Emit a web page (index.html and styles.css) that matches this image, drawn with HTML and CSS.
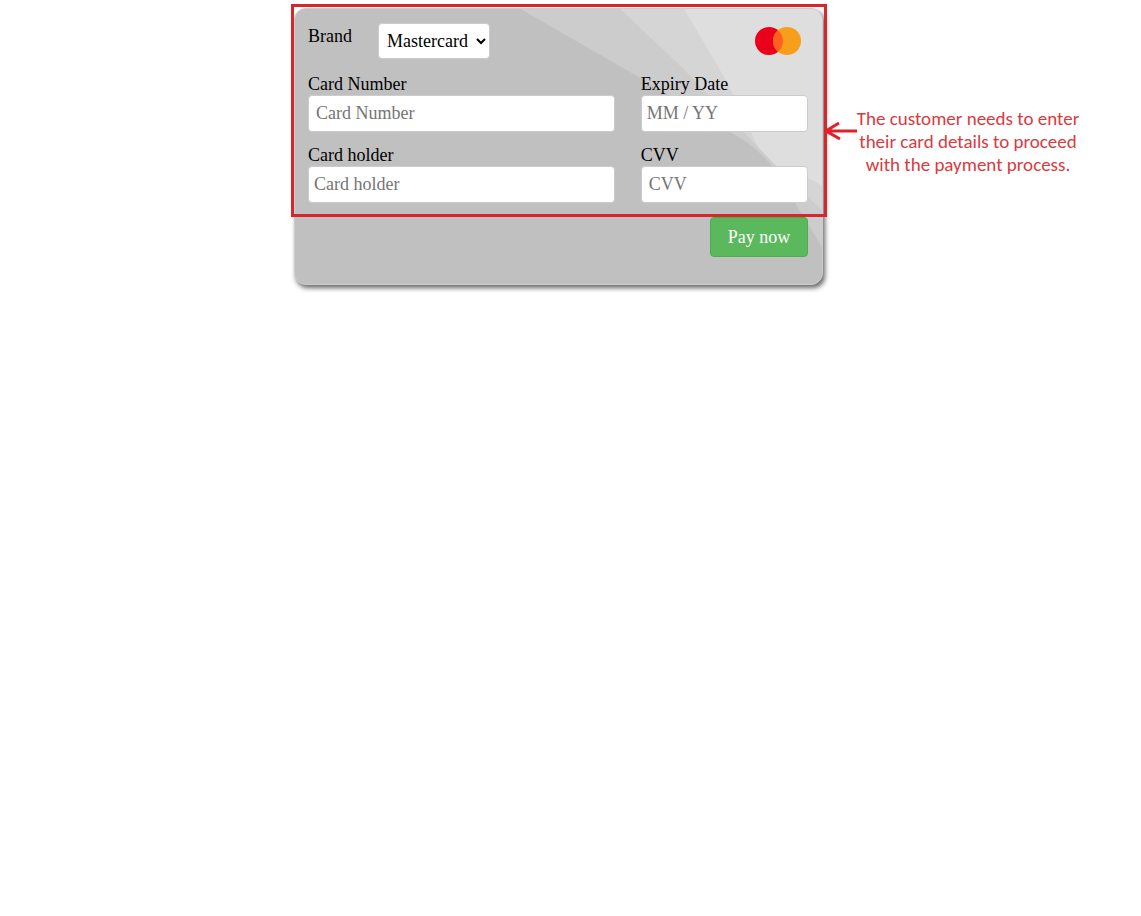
FILE: index.html
```
<!DOCTYPE html>
<html lang="en">
<head>
    <meta charset="UTF-8">
    <meta name="viewport" content="width=device-width, initial-scale=1.0">
    <title>Payment</title>
    <link rel="stylesheet" href="styles.css">
</head>
<body>
    <div class="checkout">
        <form class="card">
            <svg class="card-rays" viewBox="0 0 528 277" preserveAspectRatio="none" aria-hidden="true">
                <path d="M226 0 L347 70 L432 122 Q463 138 480 161 L511 212 L528 240 V0 Z" fill="#cccccc"/>
                <path d="M326 0 L390 61 L400 72 L481 157 L528 203 V0 Z" fill="#d5d5d5"/>
                <path d="M390 0 L432 72 L464 139 L481 157 Q507 166 528 178 V0 Z" fill="#dedede"/>
            </svg>
            <div class="brand-row">
                <label for="brand">Brand</label>
                <select id="brand">
                    <option>Mastercard</option>
                    <option>Visa</option>
                </select>
                <svg class="brand-logo" viewBox="0 0 46 28" role="img" aria-label="Mastercard">
                    <circle cx="14" cy="14" r="14" fill="#eb001b"/>
                    <circle cx="32" cy="14" r="14" fill="#f79e1b"/>
                    <path d="M23 3.3 A14 14 0 0 1 23 24.7 A14 14 0 0 1 23 3.3 Z" fill="#ff5f1f"/>
                </svg>
            </div>
            <div class="fields">
                <div class="field">
                    <label for="number">Card Number</label>
                    <input type="text" id="number" class="indent" placeholder="Card Number">
                </div>
                <div class="field">
                    <label for="expiry">Expiry Date</label>
                    <input type="text" id="expiry" placeholder="MM / YY">
                </div>
                <div class="field">
                    <label for="holder">Card holder</label>
                    <input type="text" id="holder" placeholder="Card holder">
                </div>
                <div class="field">
                    <label for="cvv">CVV</label>
                    <input type="text" id="cvv" class="indent" placeholder="CVV">
                </div>
            </div>
            <button type="button" class="pay">Pay now</button>
        </form>
        <div class="highlight"></div>
        <div class="note">
            <svg class="arrow" viewBox="0 0 32 20" aria-hidden="true">
                <path d="M32 10 H2 M14 2 L1 10 L15 18" fill="none" stroke="#e3202a" stroke-width="3"/>
            </svg>
            <p>The customer needs to enter their card details to proceed with the payment process.</p>
        </div>
    </div>
</body>
</html>
```
FILE: styles.css
```
* {
    box-sizing: border-box;
}
body {
    margin: 0;
    padding: 8px 24px 8px 0;
    background-color: #fff;
    font-family: 'Liberation Serif', 'Times New Roman', serif;
    font-size: 18px;
    line-height: 21px;
    color: #000;
}
.checkout {
    position: relative;
    max-width: 529px;
    margin: 0 auto;
}
.card {
    position: relative;
    padding: 14px 14px 27px 13px;
    border: 1px solid #ccc;
    border-radius: 12px;
    background-color: #c0c0c0;
    box-shadow: 2px 3px 5px rgba(0, 0, 0, 0.6);
    overflow: hidden;
    display: flex;
    flex-direction: column;
}
.card-rays {
    position: absolute;
    top: 0;
    left: 0;
    width: 100%;
    height: 100%;
}
.brand-row,
.fields,
.pay {
    position: relative;
}
.brand-row {
    display: flex;
    align-items: flex-start;
    margin-bottom: 15px;
}
.brand-row label {
    width: 70px;
    padding-top: 3px;
}
.brand-logo {
    width: 46px;
    height: 28px;
    margin: 4px 7px 0 auto;
}
select,
input {
    font: inherit;
    border: 1px solid #ccc;
    border-radius: 4px;
    background-color: #fff;
    color: #000;
}
select {
    width: 112px;
    height: 36px;
    padding: 0 0 0 4px;
}
input {
    width: 100%;
    height: 37px;
    padding: 0 5px;
}
input.indent {
    padding: 0 7px;
}
input::placeholder {
    color: #757575;
}
.fields {
    display: grid;
    grid-template-columns: 11fr 6fr;
    gap: 13px 26px;
}
.field {
    display: flex;
    flex-direction: column;
}
.pay {
    align-self: flex-end;
    width: 98px;
    height: 40px;
    margin-top: 14px;
    padding: 0;
    font: inherit;
    color: #fff;
    background-color: #5cb85c;
    border: 1px solid #4cae4c;
    border-radius: 4px;
    cursor: pointer;
}
.pay:hover {
    background-color: #449d44;
}
.highlight {
    position: absolute;
    top: -4px;
    left: -3px;
    right: -4px;
    bottom: 68px;
    border: 3px solid #d7262c;
    pointer-events: none;
}
.note {
    position: absolute;
    top: 99px;
    left: 100%;
    display: flex;
    width: 256px;
    padding-left: 2px;
}
.note p {
    flex: 1;
    margin: 0 -4px;
    font-family: Carlito, Lato, sans-serif;
    font-size: 19px;
    line-height: 23px;
    text-align: center;
    color: #d93a40;
}
.arrow {
    flex: none;
    width: 32px;
    height: 20px;
    margin-top: 14px;
}
```
